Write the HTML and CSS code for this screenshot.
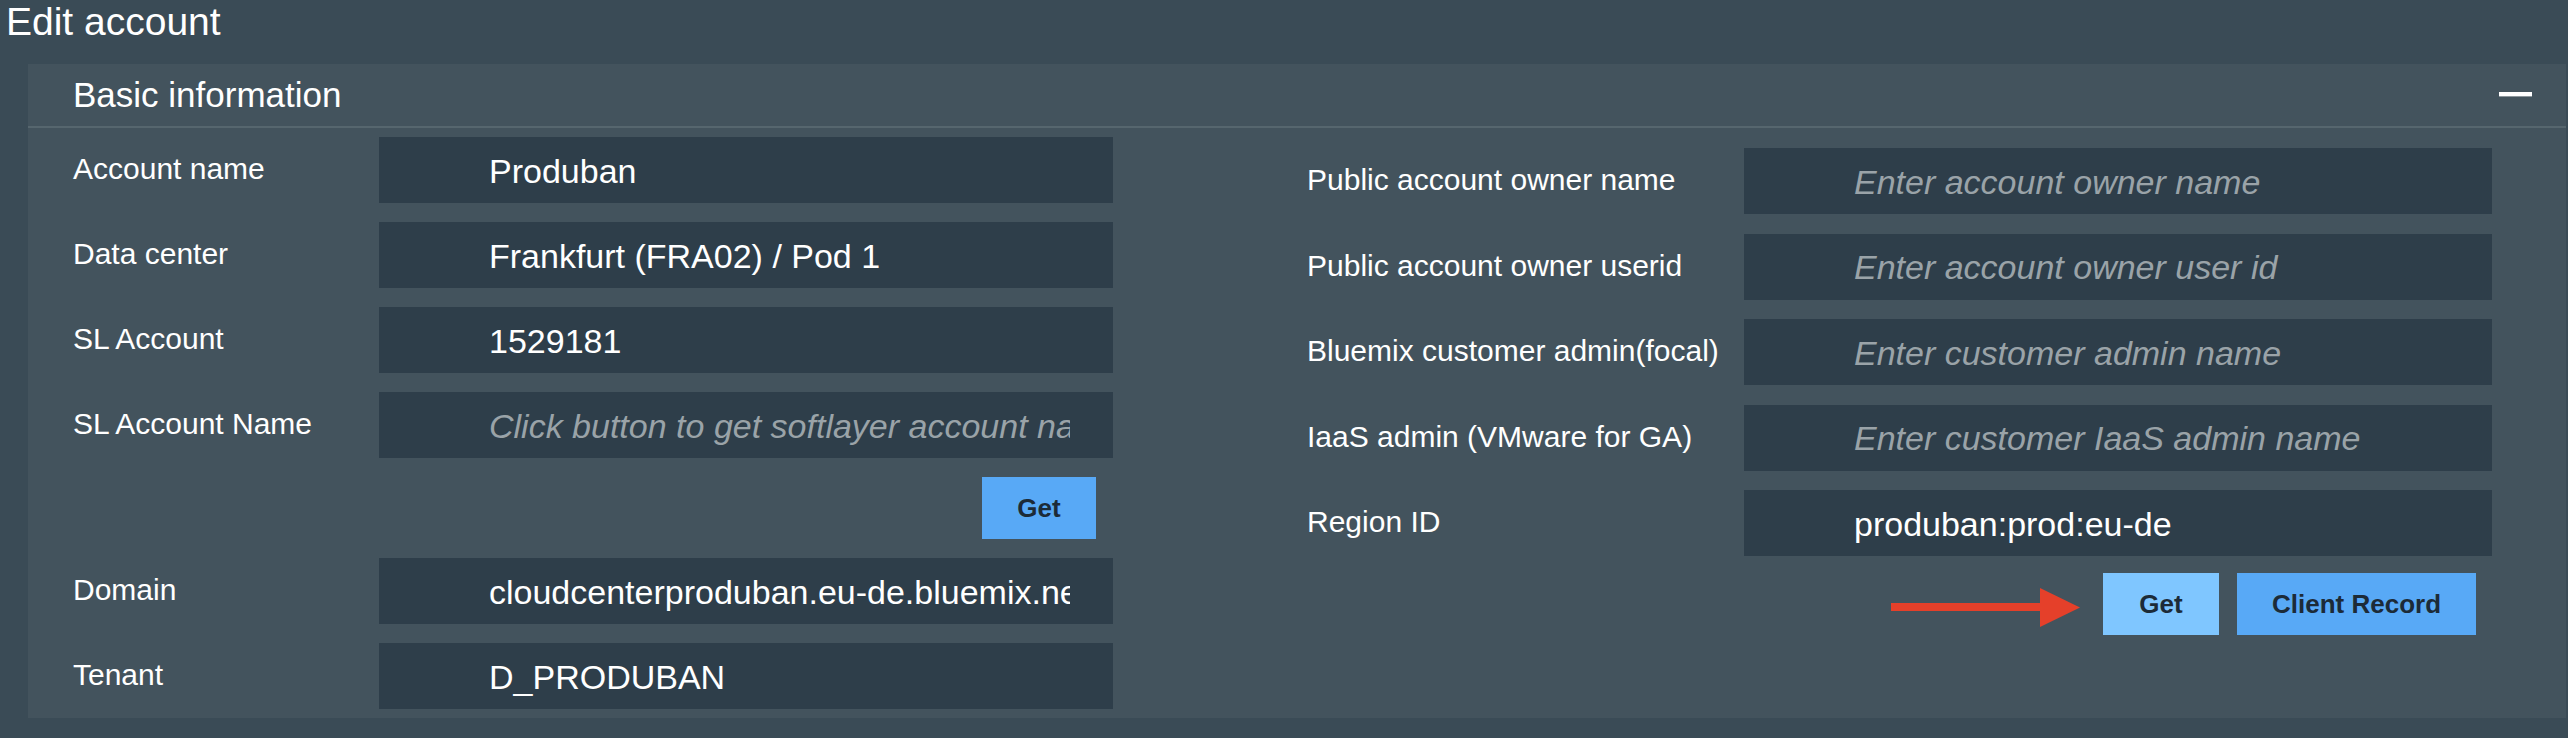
FILE: index.html
```html
<!DOCTYPE html>
<html>
<head>
<meta charset="utf-8">
<title>Edit account</title>
<link rel="stylesheet" href="styles.css">
</head>
<body>
<div class="page">
  <h1 class="page-title">Edit account</h1>
  <section class="panel">
    <header class="panel-header">
      <h2 class="panel-title">Basic information</h2>
      <span class="collapse"></span>
    </header>
    <div class="panel-body">
      <div class="col col-left">
        <div class="row"><label class="lbl">Account name</label><input class="field" type="text" value="Produban"></div>
        <div class="row"><label class="lbl">Data center</label><input class="field" type="text" value="Frankfurt (FRA02) / Pod 1"></div>
        <div class="row"><label class="lbl">SL Account</label><input class="field" type="text" value="1529181"></div>
        <div class="row"><label class="lbl">SL Account Name</label><input class="field" type="text" placeholder="Click button to get softlayer account name"></div>
        <div class="actions actions-left"><button class="btn btn-get">Get</button></div>
        <div class="row"><label class="lbl">Domain</label><input class="field" type="text" value="cloudcenterproduban.eu-de.bluemix.net"></div>
        <div class="row"><label class="lbl">Tenant</label><input class="field" type="text" value="D_PRODUBAN"></div>
      </div>
      <div class="col col-right">
        <div class="row"><label class="lbl">Public account owner name</label><input class="field" type="text" placeholder="Enter account owner name"></div>
        <div class="row"><label class="lbl">Public account owner userid</label><input class="field" type="text" placeholder="Enter account owner user id"></div>
        <div class="row"><label class="lbl">Bluemix customer admin(focal)</label><input class="field" type="text" placeholder="Enter customer admin name"></div>
        <div class="row"><label class="lbl">IaaS admin (VMware for GA)</label><input class="field" type="text" placeholder="Enter customer IaaS admin name"></div>
        <div class="row"><label class="lbl">Region ID</label><input class="field" type="text" value="produban:prod:eu-de"></div>
        <div class="actions actions-right">
          <svg class="arrow" width="189" height="39" viewBox="0 0 189 39">
            <rect x="0" y="15" width="151" height="8" fill="#e5402a"/>
            <polygon points="149,0 189,19.5 149,39" fill="#e5402a"/>
          </svg>
          <button class="btn btn-get btn-hover">Get</button>
          <button class="btn btn-record">Client Record</button>
        </div>
      </div>
    </div>
  </section>
</div>
</body>
</html>
```
FILE: styles.css
```css
html, body {
  margin: 0;
  padding: 0;
  background: #3a4b56;
}
body {
  width: 2568px;
  height: 738px;
  overflow: hidden;
  font-family: "Liberation Sans", Arial, Helvetica, sans-serif;
  color: #ffffff;
}
.page {
  display: flex;
  flex-direction: column;
}
.page-title {
  margin: 0;
  height: 64px;
  box-sizing: border-box;
  padding: 2px 0 0 6px;
  font-size: 39px;
  line-height: 40px;
  font-weight: normal;
  color: #ffffff;
}
.panel {
  margin-left: 28px;
  width: 2538px;
  background: #43535d;
}
.panel-header {
  height: 64px;
  box-sizing: border-box;
  border-bottom: 2px solid #56666e;
  display: flex;
  align-items: center;
  justify-content: space-between;
  padding: 0 34px 0 45px;
}
.panel-title {
  margin: 0;
  font-size: 35px;
  font-weight: normal;
  line-height: 40px;
  color: #ffffff;
}
.collapse {
  display: block;
  width: 33px;
  height: 4px;
  background: #ffffff;
  box-shadow: 0 1px 0 #8c969c;
  margin-top: -2px;
}
.panel-body {
  display: flex;
  padding: 9px 0 9px 45px;
}
.col {
  display: flex;
  flex-direction: column;
}
.col-left {
  width: 1040px;
  gap: 19px;
}
.col-right {
  margin-left: 194px;
  width: 1185px;
  padding-top: 11px;
  gap: 19.5px;
}
.row {
  display: flex;
  align-items: center;
  height: 66px;
}
.col-left .lbl { width: 306px; }
.col-right .lbl { width: 437px; }
.lbl {
  flex: none;
  font-size: 30px;
  line-height: 36px;
  color: #ffffff;
  margin-top: -2px;
}
.field {
  flex: 1;
  min-width: 0;
  height: 66px;
  box-sizing: border-box;
  border: none;
  outline: none;
  margin: 0;
  background: #2e3e4a;
  color: #ffffff;
  font-family: "Liberation Sans", Arial, Helvetica, sans-serif;
  font-size: 34px;
  padding: 2px 43px 0 110px;
}
.field::placeholder {
  color: #9aa3a8;
  font-style: italic;
  opacity: 1;
}
.actions {
  display: flex;
  align-items: center;
  justify-content: flex-end;
  height: 62px;
}
.actions-left {
  padding-right: 17px;
}
.actions-right {
  padding-right: 16px;
  gap: 18px;
  margin-top: -2.5px;
}
.arrow {
  display: block;
  margin-right: 5px;
  margin-top: 7px;
}
.btn {
  height: 62px;
  border: none;
  margin: 0;
  padding: 0;
  background: #58a9f6;
  color: #1c2b38;
  font-family: "Liberation Sans", Arial, Helvetica, sans-serif;
  font-weight: bold;
  font-size: 26px;
  cursor: pointer;
}
.btn-get {
  width: 114px;
}
.actions-right .btn-get {
  width: 116px;
}
.btn-hover {
  background: #7fc6ff;
}
.btn-record {
  width: 239px;
}
```
